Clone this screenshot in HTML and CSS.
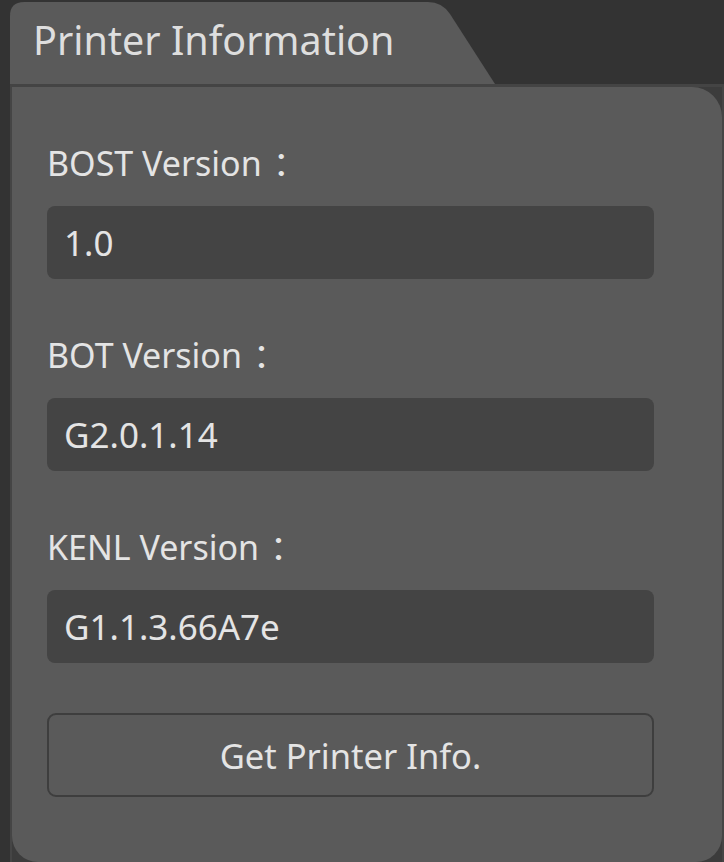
FILE: index.html
```html
<!DOCTYPE html>
<html>
<head>
<meta charset="utf-8">
<link rel="stylesheet" href="styles.css">
</head>
<body>
<div class="app">
  <div class="tab"><span class="tab-title">Printer Information</span></div>
  <div class="frame">
    <div class="panel">
      <div class="field">
        <div class="label">BOST Version<span class="colon">：</span></div>
        <div class="value">1.0</div>
      </div>
      <div class="field">
        <div class="label">BOT Version<span class="colon">：</span></div>
        <div class="value">G2.0.1.14</div>
      </div>
      <div class="field">
        <div class="label">KENL Version<span class="colon">：</span></div>
        <div class="value">G1.1.3.66A7e</div>
      </div>
      <div class="button">Get Printer Info.</div>
    </div>
  </div>
</div>
</body>
</html>
```
FILE: styles.css
```css
html, body {
  margin: 0;
  padding: 0;
  background: #333333;
  height: 862px;
  overflow: hidden;
}
.app {
  padding-left: 10px;
  padding-top: 2px;
  font-family: "Noto Sans", "Noto Sans CJK SC", sans-serif;
  color: #e4e4e4;
}
.tab {
  width: 485px;
  height: 82px;
  background: #5a5a5a;
  clip-path: path('M0,82 L0,14 Q0,0 14,0 L418,0 Q432,0 440,12 L485,82 Z');
  display: flex;
  align-items: center;
}
.tab-title {
  font-size: 39.5px;
  padding-left: 23px;
  margin-top: -6px;
  color: #dedede;
}
.frame {
  border-top: 3px solid #444444;
  border-left: 2px solid #454545;
  border-right: 2px solid #454545;
  background: #3c3c3c;
  height: 775px;
}
.panel {
  background: #5a5a5a;
  border-radius: 0 30px 26px 26px;
  height: 775px;
  box-sizing: border-box;
  padding: 56px 0 0 35px;
  display: flex;
  flex-direction: column;
  gap: 56px;
}
.field {
  display: flex;
  flex-direction: column;
  gap: 23px;
}
.label {
  font-size: 34px;
  line-height: 40px;
  height: 40px;
  display: flex;
  align-items: center;
}
.colon {
  margin-left: 11px;
}
.value {
  width: 607px;
  height: 73px;
  box-sizing: border-box;
  background: #444444;
  border-radius: 8px;
  padding-left: 17px;
  display: flex;
  align-items: center;
  font-size: 35px;
}
.button {
  margin-top: -6px;
  width: 607px;
  height: 84px;
  box-sizing: border-box;
  border: 2px solid #3e3e3e;
  border-radius: 9px;
  display: flex;
  align-items: center;
  justify-content: center;
  font-size: 34.5px;
}
```
